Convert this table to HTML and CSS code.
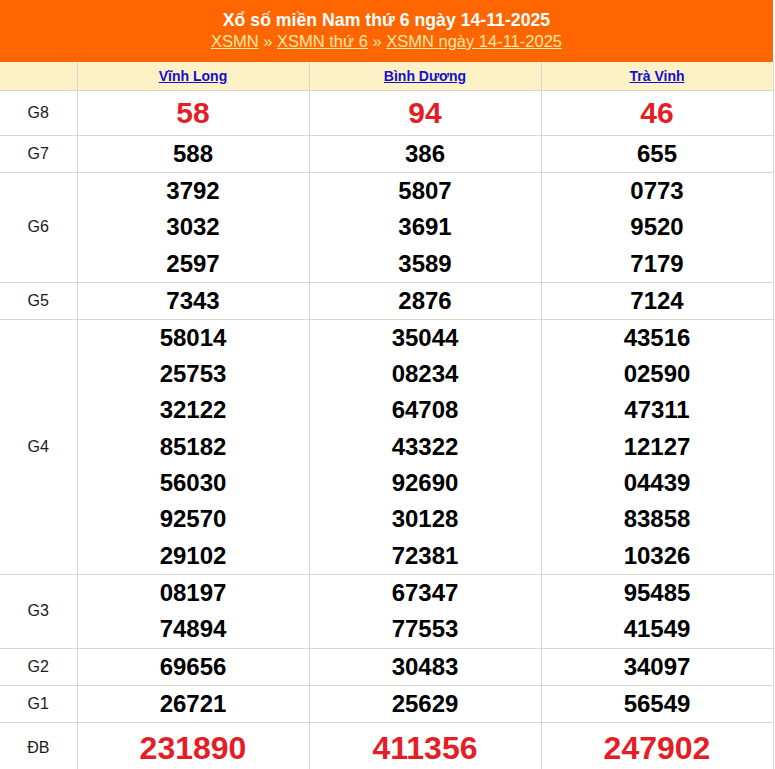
FILE: index.html
```html
<!DOCTYPE html>
<html lang="vi">
<head>
<meta charset="utf-8">
<title>XSMN 14-11-2025</title>
<link rel="stylesheet" href="styles.css">
</head>
<body>
<div class="box">
  <div class="head">
    <h2 class="title">Xổ số miền Nam thứ 6 ngày 14-11-2025</h2>
    <div class="crumbs"><a href="#">XSMN</a> » <a href="#">XSMN thứ 6</a> » <a href="#">XSMN ngày 14-11-2025</a></div>
  </div>
  <table class="kq">
    <colgroup><col class="c-lbl"><col class="c-num"><col class="c-num"><col class="c-num"></colgroup>
    <thead>
      <tr class="prov"><th></th><th><a href="#">Vĩnh Long</a></th><th><a href="#">Bình Dương</a></th><th><a href="#">Trà Vinh</a></th></tr>
    </thead>
    <tbody>
      <tr class="g8"><td class="lbl">G8</td><td><div class="n red">58</div></td><td><div class="n red">94</div></td><td><div class="n red">46</div></td></tr>
      <tr class="one"><td class="lbl">G7</td><td><div class="n">588</div></td><td><div class="n">386</div></td><td><div class="n">655</div></td></tr>
      <tr><td class="lbl">G6</td>
        <td><div class="n">3792</div><div class="n">3032</div><div class="n">2597</div></td>
        <td><div class="n">5807</div><div class="n">3691</div><div class="n">3589</div></td>
        <td><div class="n">0773</div><div class="n">9520</div><div class="n">7179</div></td></tr>
      <tr class="one"><td class="lbl">G5</td><td><div class="n">7343</div></td><td><div class="n">2876</div></td><td><div class="n">7124</div></td></tr>
      <tr><td class="lbl">G4</td>
        <td><div class="n">58014</div><div class="n">25753</div><div class="n">32122</div><div class="n">85182</div><div class="n">56030</div><div class="n">92570</div><div class="n">29102</div></td>
        <td><div class="n">35044</div><div class="n">08234</div><div class="n">64708</div><div class="n">43322</div><div class="n">92690</div><div class="n">30128</div><div class="n">72381</div></td>
        <td><div class="n">43516</div><div class="n">02590</div><div class="n">47311</div><div class="n">12127</div><div class="n">04439</div><div class="n">83858</div><div class="n">10326</div></td></tr>
      <tr><td class="lbl">G3</td>
        <td><div class="n">08197</div><div class="n">74894</div></td>
        <td><div class="n">67347</div><div class="n">77553</div></td>
        <td><div class="n">95485</div><div class="n">41549</div></td></tr>
      <tr class="one"><td class="lbl">G2</td><td><div class="n">69656</div></td><td><div class="n">30483</div></td><td><div class="n">34097</div></td></tr>
      <tr class="one"><td class="lbl">G1</td><td><div class="n">26721</div></td><td><div class="n">25629</div></td><td><div class="n">56549</div></td></tr>
      <tr class="db"><td class="lbl">ĐB</td><td><div class="n red">231890</div></td><td><div class="n red">411356</div></td><td><div class="n red">247902</div></td></tr>
    </tbody>
  </table>
</div>
</body>
</html>
```
FILE: styles.css
```css
html, body {
  margin: 0;
  padding: 0;
  background: #fff;
}
body {
  font-family: "Liberation Sans", Arial, sans-serif;
  color: #000;
}
.box {
  width: 773px;
}
.head {
  background: #ff6600;
  height: 62px;
  box-sizing: border-box;
  padding-top: 10px;
  text-align: center;
}
.title {
  margin: 0;
  font-size: 17.7px;
  line-height: 21px;
  font-weight: bold;
  color: #fff;
}
.crumbs {
  font-size: 16.5px;
  line-height: 20px;
  color: #ffe9a8;
}
.crumbs a {
  color: #ffe9a8;
  text-decoration: underline;
}
.kq {
  width: 773px;
  border-collapse: collapse;
  table-layout: fixed;
}
.c-lbl { width: 77px; }
.c-num { width: 232px; }
.kq th, .kq td {
  border: 1px solid #d9d6d0;
  padding: 0;
  text-align: center;
  vertical-align: middle;
}
.kq thead th {
  border-top: none;
}
.kq th:first-child, .kq td:first-child {
  border-left: none;
}
.prov th {
  background: #fff1c6;
  height: 28px;
  font-size: 14px;
  font-weight: bold;
}
.prov a {
  color: #1010cc;
  text-decoration: underline;
}
.lbl {
  font-size: 16px;
  color: #1a1a1a;
}
.n {
  font-size: 24px;
  font-weight: bold;
  line-height: 36.3px;
}
.one .n {
  line-height: 36px;
}
.g8 .n {
  font-size: 30px;
  line-height: 44px;
}
.db .n {
  font-size: 32px;
  line-height: 50px;
}
.red {
  color: #e41e26;
}
```
